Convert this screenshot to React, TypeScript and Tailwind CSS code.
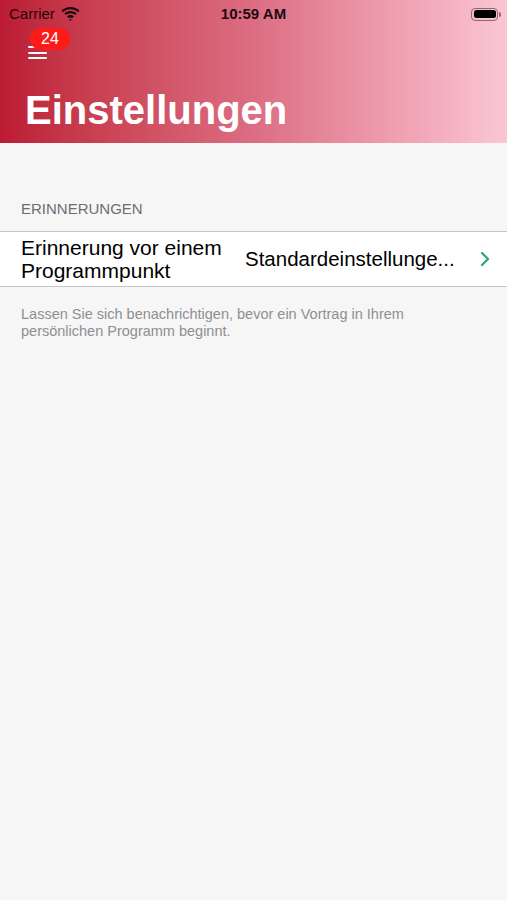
import { ChevronRight } from 'lucide-react';

function WifiIcon() {
  return (
    <svg width="19" height="14" viewBox="0 0 19 14" className="ml-[6px]">
      <path d="M9.5 2.2c2.9 0 5.5 1.1 7.5 3l1.5-1.6C16.1 1.3 12.9 0 9.5 0S2.9 1.3.5 3.6L2 5.2c2-1.9 4.6-3 7.5-3z" fill="#1c0a10" />
      <path d="M9.5 6.3c1.8 0 3.4.7 4.6 1.8l1.5-1.6C14 5 11.9 4.1 9.5 4.1S5 5 3.4 6.5l1.5 1.6c1.2-1.1 2.8-1.8 4.6-1.8z" fill="#1c0a10" />
      <path d="M9.5 10.4c.7 0 1.3.3 1.8.7l1.6-1.6c-.9-.9-2.1-1.4-3.4-1.4s-2.5.5-3.4 1.4l1.6 1.6c.5-.4 1.1-.7 1.8-.7z" fill="#1c0a10" />
      <path d="M9.5 14l1.3-1.4c-.4-.3-.8-.5-1.3-.5s-.9.2-1.3.5z" fill="#1c0a10" />
    </svg>
  );
}

function Battery() {
  return (
    <div className="flex items-center">
      <div className="w-[27px] h-[13px] rounded-[4px] border border-[#8a6a73] p-[1.5px]">
        <div className="w-full h-full rounded-[2.5px] bg-black" />
      </div>
      <div className="w-[2px] h-[5px] rounded-r-sm bg-[#8a6a73] ml-[1px]" />
    </div>
  );
}

export default function App() {
  return (
    <div className="min-h-[900px] bg-[#f6f6f6]" style={{ fontFamily: '"Liberation Sans", Arial, sans-serif' }}>
      <header className="h-[143px] bg-gradient-to-r from-[#bc1a33] via-[#dc6d83] to-[#fac6d4] flex flex-col">
        <div className="h-[28px] flex items-center pl-[9px] pr-[6px] relative">
          <span className="text-[15px] text-[#1c0a10]">Carrier</span>
          <WifiIcon />
          <span className="absolute left-0 right-0 text-center text-[15px] font-bold text-[#1c0a10]">10:59 AM</span>
          <div className="ml-auto">
            <Battery />
          </div>
        </div>
        <div className="relative h-[40px]">
          <div className="absolute left-[28px] top-[18px] flex flex-col gap-[3.5px]">
            <div className="w-[19px] h-[2px] bg-white rounded-full" />
            <div className="w-[19px] h-[2px] bg-white rounded-full" />
            <div className="w-[19px] h-[2px] bg-white rounded-full" />
          </div>
          <div className="absolute left-[30px] top-0 h-[22px] w-[40px] rounded-full bg-[#ff1a1a] flex items-center justify-center text-white text-[16px]">
            24
          </div>
        </div>
        <h1 className="pl-[25px] pt-[18px] text-[40px] leading-[48px] font-bold text-white">Einstellungen</h1>
      </header>

      <div className="pt-[57px] pl-[21px] pb-[13px] text-[15px] leading-[18px] text-[#6d6d72]">ERINNERUNGEN</div>

      <div className="bg-white border-y border-[#c6c6ca] h-[56px] flex items-center pl-[21px] pr-[10px]">
        <div className="text-[21px] leading-[23px] text-black w-[220px]">
          Erinnerung vor einem
          <br />
          Programmpunkt
        </div>
        <div className="ml-[4px] text-[20.5px] text-black whitespace-nowrap">Standardeinstellunge...</div>
        <ChevronRight className="ml-auto text-[#35a57b]" size={24} strokeWidth={2.3} />
      </div>

      <p className="pt-[19px] pl-[21px] pr-[40px] text-[14.5px] leading-[17px] text-[#8e8e93]">
        Lassen Sie sich benachrichtigen, bevor ein Vortrag in Ihrem
        <br />
        persönlichen Programm beginnt.
      </p>
    </div>
  );
}
